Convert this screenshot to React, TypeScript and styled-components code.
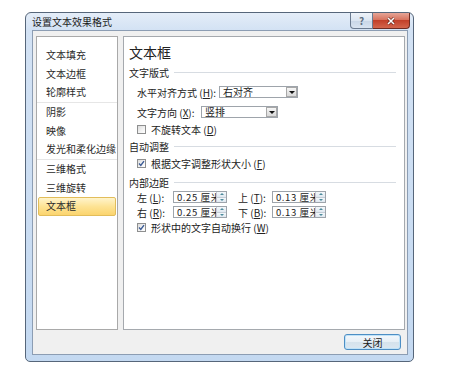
import * as React from 'react'
import styled, { createGlobalStyle } from 'styled-components'

const FONT = `"Noto Sans CJK SC", "Noto Sans", sans-serif`

const GlobalStyle = createGlobalStyle`
  body {
    margin: 0;
    background: #ffffff;
    font-family: ${FONT};
  }
`

const Window = styled.div`
  position: relative;
  box-sizing: border-box;
  width: 389px;
  height: 350px;
  margin: 12px 0 0 25px;
  border: 1px solid #56667a;
  border-radius: 6px 6px 5px 5px;
  background: linear-gradient(180deg, #e4edf8 0px, #d3e2f4 17px, #c4d9f1 100%);
  display: flex;
  flex-direction: column;
`

const TitleBar = styled.div`
  height: 17px;
  display: flex;
  align-items: center;
  padding-left: 6px;
  font-size: 10px;
  color: #1b1b1b;
`

const CaptionButtons = styled.div`
  position: absolute;
  top: 0;
  right: 3px;
  display: flex;
`

const HelpButton = styled.div`
  box-sizing: border-box;
  width: 23px;
  height: 16px;
  border: 1px solid #6b7b90;
  border-top: none;
  border-radius: 0 0 0 4px;
  background: linear-gradient(180deg, #eef3f9 0%, #dbe5f1 50%, #c8d6e7 51%, #d9e4f1 100%);
  color: #5f6f82;
  font-size: 10px;
  font-weight: bold;
  display: flex;
  align-items: center;
  justify-content: center;
`

const CloseButton = styled.div`
  box-sizing: border-box;
  width: 37px;
  height: 16px;
  border: 1px solid #6f2b22;
  border-top: none;
  border-left: none;
  border-radius: 0 0 4px 0;
  background: linear-gradient(180deg, #e6a597 0%, #d7735f 45%, #c2402a 50%, #d3654c 100%);
  display: flex;
  align-items: center;
  justify-content: center;
`

const Client = styled.div`
  flex: 1;
  margin: 0 5px 6px 6px;
  border: 1px solid #8c9db3;
  background: #f0f0f0;
  display: flex;
  flex-direction: column;
  padding: 5px 2px 4px 3px;
  min-height: 0;
`

const Panels = styled.div`
  flex: 1;
  display: flex;
  gap: 5px;
  min-height: 0;
`

const NavList = styled.div`
  box-sizing: border-box;
  width: 82px;
  border: 1px solid #a9a9a9;
  background: #ffffff;
  padding: 9px 1px 0 1px;
  display: flex;
  flex-direction: column;
`

const NavItem = styled.div<{ $active?: boolean }>`
  box-sizing: border-box;
  height: 18.5px;
  display: flex;
  align-items: center;
  padding-left: 7px;
  padding-bottom: 1px;
  font-size: 10px;
  color: #2a2a2a;
  white-space: nowrap;
  border: 1px solid ${p => (p.$active ? '#e2bd5a' : 'transparent')};
  border-radius: 2px;
  background: ${p => (p.$active ? 'linear-gradient(180deg, #fff4cc 0%, #fde394 50%, #fbd46e 100%)' : 'transparent')};
`

const NavDivider = styled.div`
  height: 1px;
  margin: 0.25px -1px;
  background: #e6e6e6;
`

const Content = styled.div`
  flex: 1;
  box-sizing: border-box;
  border: 1px solid #a5a9ae;
  background: #ffffff;
  padding: 0 0 0 5px;
  display: flex;
  flex-direction: column;
`

const Heading = styled.div`
  margin-top: 6px;
  height: 18px;
  line-height: 18px;
  font-size: 14px;
  color: #222;
`

const Section = styled.div<{ $mt: number }>`
  margin-top: ${p => p.$mt}px;
  height: 14px;
  display: flex;
  align-items: center;
  font-size: 10px;
  color: #222;
`

const SectionRule = styled.div`
  flex: 1;
  height: 1px;
  margin: 1px 8px 0 5px;
  background: #d7dce2;
`

const Row = styled.div<{ $mt: number; $h?: number }>`
  margin-top: ${p => p.$mt}px;
  margin-left: 8px;
  height: ${p => p.$h ?? 14}px;
  display: flex;
  align-items: center;
  font-size: 10px;
  color: #222;
  white-space: nowrap;
`

const FieldLabel = styled.span<{ $w: number }>`
  width: ${p => p.$w}px;
  flex-shrink: 0;
`

const Select = styled.div<{ $w: number }>`
  box-sizing: border-box;
  width: ${p => p.$w}px;
  height: 12px;
  border: 1px solid #9ea4ab;
  background: #fff;
  display: flex;
  align-items: center;
`

const SelectValue = styled.span`
  flex: 1;
  padding-left: 3px;
  font-size: 10px;
  line-height: 10px;
`

const SelectArrow = styled.span`
  box-sizing: border-box;
  width: 11px;
  height: 10px;
  margin-right: 0;
  border: 1px solid #a8a8a8;
  background: linear-gradient(180deg, #f7f7f7 0%, #e6e6e6 50%, #d9d9d9 100%);
  display: flex;
  align-items: center;
  justify-content: center;

  &::after {
    content: '';
    border-left: 3px solid transparent;
    border-right: 3px solid transparent;
    border-top: 3px solid #111;
  }
`

const Spin = styled.div`
  box-sizing: border-box;
  width: 54px;
  height: 12px;
  border: 1px solid #9ea4ab;
  background: #fff;
  display: flex;
  align-items: stretch;
  overflow: hidden;
`

const SpinText = styled.span`
  flex: 1;
  overflow: hidden;
  padding-left: 3px;
  font-size: 9.5px;
  line-height: 10px;
  letter-spacing: 0.6px;
`

const SpinButtons = styled.span`
  width: 9px;
  display: flex;
  flex-direction: column;
  border-left: 1px solid #c4ccd6;
`

const SpinHalf = styled.span<{ $down?: boolean }>`
  flex: 1;
  background: linear-gradient(180deg, #f4f8fb 0%, #dfe8f0 100%);
  border-bottom: ${p => (p.$down ? 'none' : '1px solid #c4ccd6')};
  display: flex;
  align-items: center;
  justify-content: center;

  &::after {
    content: '';
    border-left: 2px solid transparent;
    border-right: 2px solid transparent;
    ${p => (p.$down ? 'border-top: 2px solid #4c8a9c;' : 'border-bottom: 2px solid #4c8a9c;')}
  }
`

const Gap = styled.span<{ $w: number }>`
  width: ${p => p.$w}px;
  flex-shrink: 0;
`

const CheckBox = styled.span`
  box-sizing: border-box;
  width: 9px;
  height: 9px;
  margin-right: 5px;
  border: 1px solid #8e8f8f;
  background: linear-gradient(135deg, #dcdcdc 0%, #f4f4f4 60%, #ffffff 100%);
  display: flex;
  align-items: center;
  justify-content: center;
  flex-shrink: 0;
`

const Footer = styled.div`
  margin-top: 4px;
  height: 16px;
  display: flex;
  justify-content: flex-end;
  padding-right: 4px;
`

const PushButton = styled.div`
  box-sizing: border-box;
  width: 57px;
  height: 16px;
  border: 1px solid #4d8ec4;
  border-radius: 3px;
  box-shadow: inset 0 0 0 1px #bfe2f8;
  background: linear-gradient(180deg, #f3f8fc 0%, #e6eef5 50%, #d5e2ec 51%, #dbe7f1 100%);
  font-size: 10px;
  color: #1b1b1b;
  display: flex;
  align-items: center;
  justify-content: center;
`

const Key = styled.u`
  text-underline-offset: 1px;
`

const Check = () => (
  <svg width="7" height="7" viewBox="0 0 7 7">
    <path d="M1 3.6 L2.8 5.4 L6 1.2" fill="none" stroke="#3b5b95" strokeWidth="1.4" />
  </svg>
)

const CloseGlyph = () => (
  <svg width="10" height="8" viewBox="0 0 10 8">
    <path d="M2 1 L8 7 M8 1 L2 7" stroke="#5a1a10" strokeWidth="2.6" />
    <path d="M2 1 L8 7 M8 1 L2 7" stroke="#ffffff" strokeWidth="1.6" />
  </svg>
)

const navGroups = [
  ['文本填充', '文本边框', '轮廓样式'],
  ['阴影', '映像', '发光和柔化边缘'],
  ['三维格式', '三维旋转', '文本框'],
]

const SpinField = ({ value }: { value: string }) => (
  <Spin>
    <SpinText>{value}</SpinText>
    <SpinButtons>
      <SpinHalf />
      <SpinHalf $down />
    </SpinButtons>
  </Spin>
)

const App: React.FC = () => (
  <>
    <GlobalStyle />
    <Window>
      <TitleBar>设置文本效果格式</TitleBar>
      <CaptionButtons>
        <HelpButton>?</HelpButton>
        <CloseButton>
          <CloseGlyph />
        </CloseButton>
      </CaptionButtons>
      <Client>
        <Panels>
          <NavList>
            {navGroups.map((group, gi) => (
              <React.Fragment key={gi}>
                {gi > 0 && <NavDivider />}
                {group.map(item => (
                  <NavItem key={item} $active={item === '文本框'}>
                    {item}
                  </NavItem>
                ))}
              </React.Fragment>
            ))}
          </NavList>
          <Content>
            <Heading>文本框</Heading>
            <Section $mt={4}>
              文字版式
              <SectionRule />
            </Section>
            <Row $mt={5} $h={16}>
              <FieldLabel $w={82}>
                水平对齐方式 (<Key>H</Key>):
              </FieldLabel>
              <Select $w={79}>
                <SelectValue>右对齐</SelectValue>
                <SelectArrow />
              </Select>
            </Row>
            <Row $mt={4} $h={16}>
              <FieldLabel $w={64}>
                文字方向 (<Key>X</Key>):
              </FieldLabel>
              <Select $w={77}>
                <SelectValue>竖排</SelectValue>
                <SelectArrow />
              </Select>
            </Row>
            <Row $mt={2}>
              <CheckBox />
              不旋转文本 (<Key>D</Key>)
            </Row>
            <Section $mt={3}>
              自动调整
              <SectionRule />
            </Section>
            <Row $mt={3}>
              <CheckBox>
                <Check />
              </CheckBox>
              根据文字调整形状大小 (<Key>F</Key>)
            </Row>
            <Section $mt={5}>
              内部边距
              <SectionRule />
            </Section>
            <Row $mt={1}>
              <FieldLabel $w={36}>
                左 (<Key>L</Key>):
              </FieldLabel>
              <SpinField value="0.25 厘米" />
              <Gap $w={11} />
              <FieldLabel $w={34}>
                上 (<Key>T</Key>):
              </FieldLabel>
              <SpinField value="0.13 厘米" />
            </Row>
            <Row $mt={1}>
              <FieldLabel $w={36}>
                右 (<Key>R</Key>):
              </FieldLabel>
              <SpinField value="0.25 厘米" />
              <Gap $w={11} />
              <FieldLabel $w={34}>
                下 (<Key>B</Key>):
              </FieldLabel>
              <SpinField value="0.13 厘米" />
            </Row>
            <Row $mt={1}>
              <CheckBox>
                <Check />
              </CheckBox>
              形状中的文字自动换行 (<Key>W</Key>)
            </Row>
          </Content>
        </Panels>
        <Footer>
          <PushButton>关闭</PushButton>
        </Footer>
      </Client>
    </Window>
  </>
)

export default App
